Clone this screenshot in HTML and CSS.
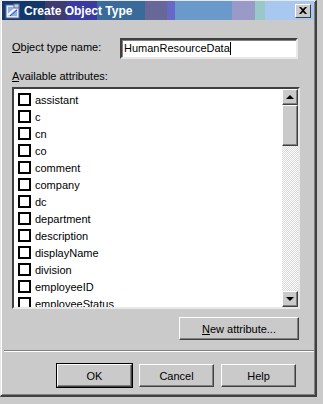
FILE: index.html
```
<!DOCTYPE html>
<html lang="en">
<head>
  <meta charset="UTF-8">
  <title>Create Object Type</title>
  <link rel="stylesheet" href="styles.css">
</head>
<body>
  <div class="dialog">

    <div class="titlebar">
      <svg class="appicon" width="16" height="16" viewBox="0 0 16 16">
        <rect x="1" y="2" width="13" height="13" fill="#e8e8f8" stroke="#5a6aa0"/>
        <rect x="3" y="4" width="9" height="9" fill="#8fb0e8"/>
        <path d="M3 12 L12 4" stroke="#ffffff" stroke-width="2"/>
        <path d="M5 13 L12 7" stroke="#3050a0" stroke-width="1"/>
        <rect x="9" y="1" width="5" height="4" fill="#c0c8e0" stroke="#5a6aa0"/>
      </svg>
      <span class="title">Create Object Type</span>
      <div class="closebtn">
        <svg width="8" height="7" viewBox="0 0 8 7">
          <path d="M0 0 L2 0 L4 2 L6 0 L8 0 L5 3.5 L8 7 L6 7 L4 5 L2 7 L0 7 L3 3.5 Z" fill="#000"/>
        </svg>
      </div>
    </div>

    <div class="content">
      <div class="namerow">
        <span class="label"><u>O</u>bject type name:</span>
        <div class="textbox">HumanResourceData<span class="caret"></span></div>
      </div>

      <div class="label attrlabel"><u>A</u>vailable attributes:</div>

      <div class="listbox">
        <div class="items">
          <div class="item"><span class="check"></span>assistant</div>
          <div class="item"><span class="check"></span>c</div>
          <div class="item"><span class="check"></span>cn</div>
          <div class="item"><span class="check"></span>co</div>
          <div class="item"><span class="check"></span>comment</div>
          <div class="item"><span class="check"></span>company</div>
          <div class="item"><span class="check"></span>dc</div>
          <div class="item"><span class="check"></span>department</div>
          <div class="item"><span class="check"></span>description</div>
          <div class="item"><span class="check"></span>displayName</div>
          <div class="item"><span class="check"></span>division</div>
          <div class="item"><span class="check"></span>employeeID</div>
          <div class="item"><span class="check"></span>employeeStatus</div>
        </div>
        <div class="scrollbar">
          <div class="sbtn"><span class="arrow up"></span></div>
          <div class="thumb"></div>
          <div class="track"></div>
          <div class="sbtn"><span class="arrow down"></span></div>
        </div>
      </div>

      <div class="newrow">
        <button class="btn newbtn"><u>N</u>ew attribute...</button>
      </div>
    </div>

    <div class="separator"></div>

    <div class="buttons">
      <button class="btn default">OK</button>
      <button class="btn">Cancel</button>
      <button class="btn">Help</button>
    </div>

  </div>
</body>
</html>
```

FILE: styles.css
```
body{
  margin: 0;
  background-color: #cacaca;
  font-family: "Liberation Sans", Arial, sans-serif;
  font-size: 11px;
  color: #000;
}

.dialog{
  width: 312px;
  height: 394px;
  background-color: #cacaca;
  border-top: 1px solid #e8e8e8;
  border-left: 1px solid #e8e8e8;
  border-right: 2px solid #404040;
  border-bottom: 2px solid #404040;
  box-shadow: inset 1px 1px 0 #ffffff, inset -1px -1px 0 #808080;
  padding: 0 1px;
  display: flex;
  flex-direction: column;
}

.titlebar{
  height: 19px;
  display: flex;
  align-items: center;
  padding-left: 3px;
  padding-right: 3px;
  background: linear-gradient(to right,
    #14386a 0px, #14386a 43px,
    #3c3c70 43px, #3c3c70 65px,
    #3a3aa0 65px, #3a3aa0 95px,
    #3a6a9a 95px, #3a6a9a 143px,
    #686898 143px, #686898 165px,
    #6868c8 165px, #6868c8 173px,
    #6a9acc 173px, #6a9acc 230px,
    #9a9ac8 230px, #9a9ac8 253px,
    #98c8c8 253px, #98c8c8 263px,
    #a8c8f0 263px, #a8c8f0 100%);
}

.appicon{
  flex: none;
}

.title{
  flex: 1;
  margin-left: 3px;
  color: #ffffff;
  font-family: "Liberation Sans", Arial, sans-serif;
  font-weight: bold;
  font-size: 12px;
}

.closebtn{
  width: 14px;
  height: 12px;
  background-color: #cacaca;
  border-top: 1px solid #ffffff;
  border-left: 1px solid #ffffff;
  border-right: 1px solid #404040;
  border-bottom: 1px solid #404040;
  display: flex;
  align-items: center;
  justify-content: center;
}

.content{
  padding-left: 10px;
  padding-right: 15px;
}

.namerow{
  display: flex;
  align-items: flex-start;
  margin-top: 18px;
}

.namerow .label{
  width: 108px;
  padding-top: 3px;
}

.textbox{
  width: 172px;
  height: 17px;
  background-color: #ffffff;
  border-top: 2px solid #404040;
  border-left: 2px solid #404040;
  border-right: 2px solid #e8e8e8;
  border-bottom: 2px solid #e8e8e8;
  box-shadow: inset 1px 1px 0 #808080;
  padding-left: 2px;
  line-height: 17px;
  display: flex;
  align-items: center;
}

.caret{
  width: 1px;
  height: 13px;
  background-color: #000;
}

.attrlabel{
  margin-top: 11px;
  height: 17px;
}

.listbox{
  width: 284px;
  height: 218px;
  background-color: #ffffff;
  border-top: 2px solid #404040;
  border-left: 2px solid #404040;
  border-right: 2px solid #e8e8e8;
  border-bottom: 2px solid #e8e8e8;
  display: flex;
  overflow: hidden;
}

.items{
  flex: 1;
  padding-top: 2px;
  padding-left: 4px;
}

.item{
  height: 17px;
  display: flex;
  align-items: center;
  gap: 4px;
}

.check{
  width: 9px;
  height: 9px;
  border: 2px solid #000;
  background-color: #ffffff;
}

.scrollbar{
  width: 16px;
  display: flex;
  flex-direction: column;
}

.sbtn, .thumb{
  background-color: #cacaca;
  border-top: 1px solid #ffffff;
  border-left: 1px solid #ffffff;
  border-right: 1px solid #404040;
  border-bottom: 1px solid #404040;
  box-shadow: inset -1px -1px 0 #808080;
}

.sbtn{
  height: 14px;
  display: flex;
  align-items: center;
  justify-content: center;
}

.thumb{
  height: 39px;
}

.track{
  flex: 1;
  background-color: #e4e4e4;
  background-image: repeating-conic-gradient(#d8d8d8 0 25%, #ffffff 0 50%);
  background-size: 2px 2px;
}

.arrow{
  width: 0;
  height: 0;
  border-left: 4px solid transparent;
  border-right: 4px solid transparent;
}

.arrow.up{
  border-bottom: 4px solid #000;
}

.arrow.down{
  border-top: 4px solid #000;
}

.newrow{
  display: flex;
  justify-content: flex-end;
  margin-top: 8px;
}

.btn{
  height: 23px;
  width: 75px;
  background-color: #cacaca;
  font-family: "Liberation Sans", Arial, sans-serif;
  font-size: 11px;
  color: #000;
  border-top: 1px solid #ffffff;
  border-left: 1px solid #ffffff;
  border-right: 1px solid #404040;
  border-bottom: 1px solid #404040;
  box-shadow: inset -1px -1px 0 #808080;
  padding: 0;
}

.newbtn{
  width: 120px;
}

.btn.default{
  outline: 1px solid #000;
  outline-offset: 0;
}

.separator{
  margin-top: 10px;
  margin-left: 2px;
  height: 0;
  border-top: 1px solid #808080;
  border-bottom: 1px solid #ffffff;
}

.buttons{
  display: flex;
  justify-content: flex-end;
  gap: 7px;
  margin-top: 12px;
  padding-right: 18px;
}
```
